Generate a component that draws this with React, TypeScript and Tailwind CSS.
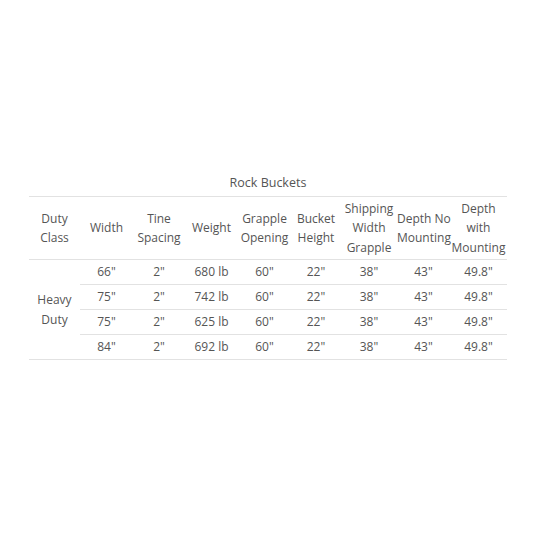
import React from "react";

const widths = [51, 53, 52, 53, 53, 50, 56, 53, 57];

const headers: string[][] = [
  ["Duty", "Class"],
  ["Width"],
  ["Tine", "Spacing"],
  ["Weight"],
  ["Grapple", "Opening"],
  ["Bucket", "Height"],
  ["Shipping", "Width", "Grapple"],
  ["Depth No", "Mounting"],
  ["Depth", "with", "Mounting"],
];

const rows = [
  ['66"', '2"', "680 lb", '60"', '22"', '38"', '43"', '49.8"'],
  ['75"', '2"', "742 lb", '60"', '22"', '38"', '43"', '49.8"'],
  ['75"', '2"', "625 lb", '60"', '22"', '38"', '43"', '49.8"'],
  ['84"', '2"', "692 lb", '60"', '22"', '38"', '43"', '49.8"'],
];

export default function App() {
  return (
    <div
      className="w-[533px] h-[533px] flex items-center justify-center bg-white pl-[3px] text-[#555555]"
      style={{ fontFamily: '"Open Sans", "Noto Sans", sans-serif' }}
    >
      <table className="table-fixed border-collapse w-[478px] text-[12px]">
        <caption className="text-center leading-[20px] pb-[3px] text-[12.5px]">Rock Buckets</caption>
        <colgroup>
          {widths.map((w, i) => (
            <col key={i} style={{ width: w }} />
          ))}
        </colgroup>
        <thead>
          <tr className="border-t border-b border-[#e2e2e2]">
            {headers.map((h, i) => (
              <th key={i} className="font-normal text-center align-middle py-[2px] px-0 leading-[19.5px] whitespace-nowrap">
                {h.map((line, j) => (
                  <div key={j}>{line}</div>
                ))}
              </th>
            ))}
          </tr>
        </thead>
        <tbody>
          {rows.map((r, ri) => (
            <tr key={ri} className="border-b border-[#e2e2e2]">
              {ri === 0 && (
                <td rowSpan={4} className="text-center align-middle leading-[19.5px] border-b border-[#e2e2e2]">
                  <div>Heavy</div>
                  <div>Duty</div>
                </td>
              )}
              {r.map((c, ci) => (
                <td key={ci} className="text-center align-middle h-[25px] p-0 leading-[20px] whitespace-nowrap">
                  {c}
                </td>
              ))}
            </tr>
          ))}
        </tbody>
      </table>
    </div>
  );
}
